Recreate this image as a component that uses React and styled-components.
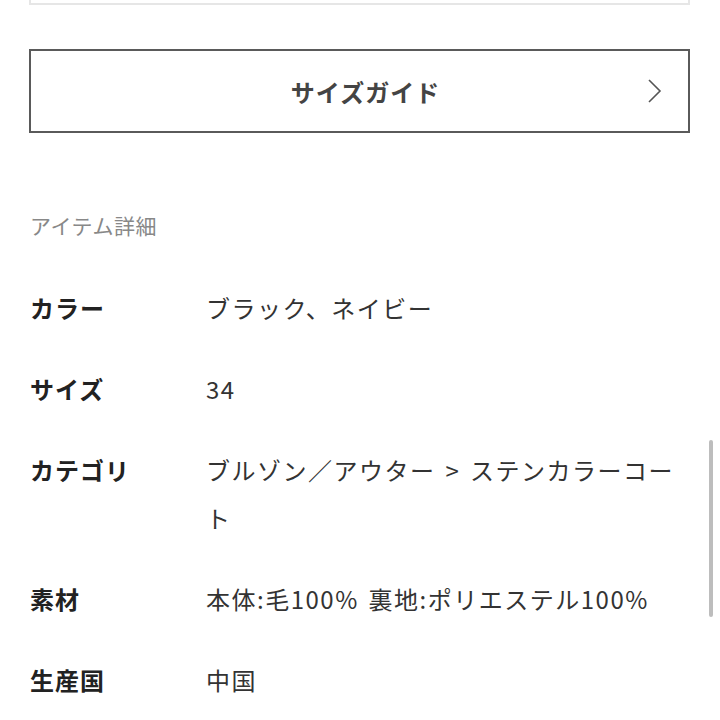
import styled, { createGlobalStyle } from "styled-components";

const GlobalStyle = createGlobalStyle`
  html, body {
    margin: 0;
    padding: 0;
    background: #fff;
  }
  body {
    font-family: "Noto Sans CJK JP", "Noto Sans", sans-serif;
    color: #333;
  }
`;

const Page = styled.div`
  padding: 0 30px 0 29px;
  box-sizing: border-box;
  width: 720px;
`;

const TopCard = styled.div`
  height: 3px;
  border: 2px solid #e6e6e6;
  border-top: none;
`;

const GuideButton = styled.button`
  display: flex;
  align-items: center;
  justify-content: center;
  position: relative;
  width: 100%;
  height: 84px;
  margin-top: 44px;
  padding: 0 0 0 12px;
  box-sizing: border-box;
  border: 2px solid #5a5a5a;
  background: #fff;
  font-family: inherit;
  font-size: 24px;
  font-weight: 700;
  letter-spacing: 1px;
  color: #444;
  cursor: pointer;
`;

const Chevron = styled.svg`
  position: absolute;
  right: 25px;
  top: 50%;
  transform: translateY(-50%);
`;

const Heading = styled.h2`
  margin: 77px 0 44px 1px;
  font-size: 21px;
  line-height: 30px;
  font-weight: 400;
  color: #888;
  letter-spacing: 0.5px;
`;

const Specs = styled.dl`
  margin: 0;
`;

const Row = styled.div`
  display: grid;
  grid-template-columns: 177px 1fr;
  margin-bottom: 33px;
  line-height: 48px;
  font-size: 24px;
  letter-spacing: 1.5px;
`;

const Label = styled.dt`
  margin: 0 0 0 1px;
  font-weight: 700;
  letter-spacing: 1px;
  color: #222;
`;

const Value = styled.dd`
  margin: 0;
  word-spacing: 3px;
  color: #333;
`;

const ScrollThumb = styled.div`
  position: fixed;
  right: 7px;
  top: 440px;
  width: 4px;
  height: 177px;
  border-radius: 2px;
  background: #bdbdbd;
`;

const specs = [
  ["カラー", "ブラック、ネイビー"],
  ["サイズ", "34"],
  ["カテゴリ", "ブルゾン／アウター > ステンカラーコート"],
  ["素材", "本体:毛100% 裏地:ポリエステル100%"],
  ["生産国", "中国"],
];

export default function App() {
  return (
    <>
      <GlobalStyle />
      <Page>
        <TopCard />
        <GuideButton>
          サイズガイド
          <Chevron width="16" height="26" viewBox="0 0 16 26" fill="none">
            <path d="M2 2 L13 13 L2 24" stroke="#555" strokeWidth="1.6" />
          </Chevron>
        </GuideButton>
        <Heading>アイテム詳細</Heading>
        <Specs>
          {specs.map(([label, value]) => (
            <Row key={label}>
              <Label>{label}</Label>
              <Value>{value}</Value>
            </Row>
          ))}
        </Specs>
      </Page>
      <ScrollThumb />
    </>
  );
}
